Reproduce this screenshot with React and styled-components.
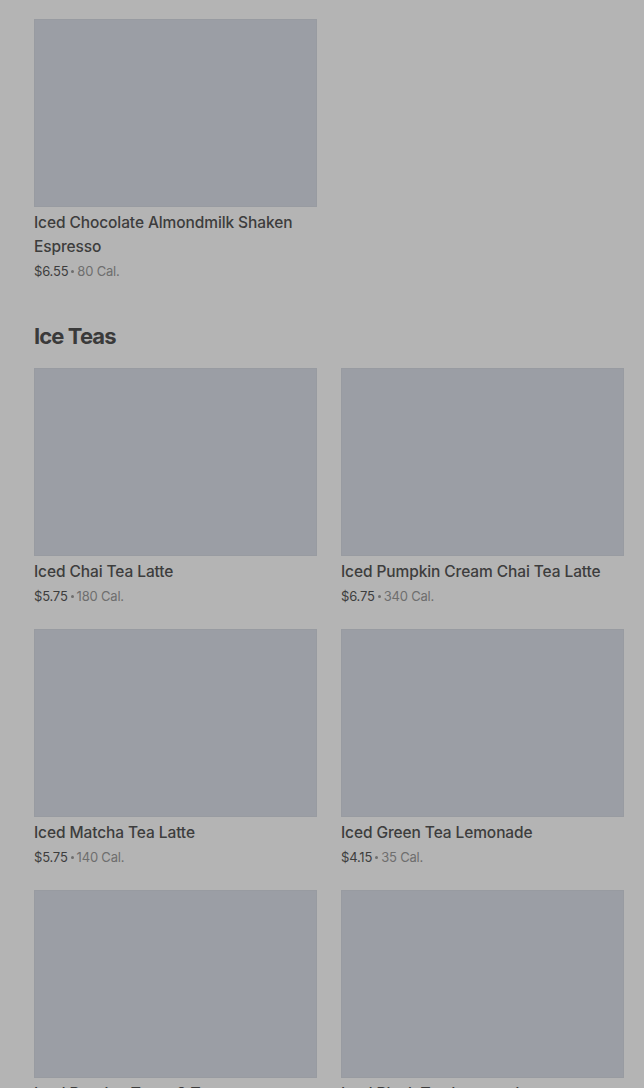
import styled, { createGlobalStyle } from "styled-components";

const GlobalStyle = createGlobalStyle`
html, body {
  margin: 0;
  padding: 0;
  background: #b4b4b4;
  font-family: Inter, "Noto Sans", Arial, sans-serif;
  overflow: hidden;
}
`

const Page = styled.div`
padding: 19px 20px 0 34px;
`
const Section = styled.section`
margin-bottom: 39px;
`
const Heading = styled.h2`
margin: 0 0 16px;
font-size: 22px;
line-height: 32px;
font-weight: 700;
letter-spacing: -0.9px;
color: #3a3a3a;
`
const Grid = styled.div`
display: grid;
grid-template-columns: 283px 283px;
column-gap: 24px;
row-gap: 23px;
`
const Card = styled.div`
display: flex;
flex-direction: column;
`
const Thumb = styled.div`
height: 188px;
background: #9b9ea5;
box-shadow: inset 0 0 0 1px #989ba1;
`
const Name = styled.div`
margin-top: 4px;
font-size: 15.5px;
line-height: 24px;
font-weight: 500;
color: #3d3d3d;
letter-spacing: -0.1px;
`
const Meta = styled.div`
margin-top: 2px;
display: flex;
align-items: center;
gap: 3px;
height: 20px;
font-size: 13px;
color: #3d3d3d;
letter-spacing: -0.2px;
`
const Dot = styled.span`
width: 3px;
height: 3px;
border-radius: 50%;
background: #6e6e6e;
`
const Cal = styled.span`
color: #6e6e6e;
`

const Item = ({ name, price, cal }) => (
  <Card>
    <Thumb />
    <Name>{name}</Name>
    <Meta>
      <span>{price}</span>
      <Dot />
      <Cal>{cal} Cal.</Cal>
    </Meta>
  </Card>
)

const teas = [
  { name: "Iced Chai Tea Latte", price: "$5.75", cal: 180 },
  { name: "Iced Pumpkin Cream Chai Tea Latte", price: "$6.75", cal: 340 },
  { name: "Iced Matcha Tea Latte", price: "$5.75", cal: 140 },
  { name: "Iced Green Tea Lemonade", price: "$4.15", cal: 35 },
  { name: "Iced Passion Tango® Tea", price: "$3.95", cal: 0 },
  { name: "Iced Black Tea Lemonade", price: "$4.15", cal: 70 },
]

const App = () => (
  <Page>
    <GlobalStyle />
    <Section>
      <Grid>
        <Item name="Iced Chocolate Almondmilk Shaken Espresso" price="$6.55" cal={80} />
      </Grid>
    </Section>
    <Section>
      <Heading>Ice Teas</Heading>
      <Grid>
        {teas.map((t) => (
          <Item key={t.name} {...t} />
        ))}
      </Grid>
    </Section>
  </Page>
)

export default App;
